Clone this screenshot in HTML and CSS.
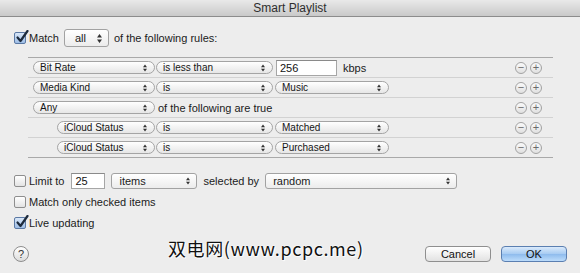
FILE: index.html
```html
<!DOCTYPE html>
<html lang="en">

<head>
    <meta charset="UTF-8">
    <title>Smart Playlist</title>
    <link rel="stylesheet" href="styles.css">
</head>

<body>
    <div class="titlebar">Smart Playlist</div>

    <div class="dialog">
        <div class="match-row">
            <span class="check on"><svg viewBox="0 0 14 14" width="14" height="14"><path d="M2.5 7.5 L5.5 11 L12.5 1" fill="none" stroke="#1c2a3c" stroke-width="2.2" stroke-linecap="round" stroke-linejoin="round"/></svg></span>
            <span class="lbl">Match</span>
            <span class="popup all">all<svg class="arr" viewBox="0 0 5 9" width="5" height="9"><path d="M0 3.5 L2.5 0 L5 3.5Z M0 5.5 L2.5 9 L5 5.5Z" fill="#333"/></svg></span>
            <span class="lbl">of the following rules:</span>
        </div>

        <div class="rules">
            <div class="rule">
                <span class="pill field">Bit Rate<svg class="arr" viewBox="0 0 5 9" width="4" height="8"><path d="M0 3.5 L2.5 0 L5 3.5Z M0 5.5 L2.5 9 L5 5.5Z" fill="#333"/></svg></span>
                <span class="pill op">is less than<svg class="arr" viewBox="0 0 5 9" width="4" height="8"><path d="M0 3.5 L2.5 0 L5 3.5Z M0 5.5 L2.5 9 L5 5.5Z" fill="#333"/></svg></span>
                <input class="text value-input" type="text" value="256">
                <span class="lbl unit">kbps</span>
                <span class="pm"><span class="round">&minus;</span><span class="round">+</span></span>
            </div>
            <div class="rule">
                <span class="pill field">Media Kind<svg class="arr" viewBox="0 0 5 9" width="4" height="8"><path d="M0 3.5 L2.5 0 L5 3.5Z M0 5.5 L2.5 9 L5 5.5Z" fill="#333"/></svg></span>
                <span class="pill op">is<svg class="arr" viewBox="0 0 5 9" width="4" height="8"><path d="M0 3.5 L2.5 0 L5 3.5Z M0 5.5 L2.5 9 L5 5.5Z" fill="#333"/></svg></span>
                <span class="pill value">Music<svg class="arr" viewBox="0 0 5 9" width="4" height="8"><path d="M0 3.5 L2.5 0 L5 3.5Z M0 5.5 L2.5 9 L5 5.5Z" fill="#333"/></svg></span>
                <span class="pm"><span class="round">&minus;</span><span class="round">+</span></span>
            </div>
            <div class="rule">
                <span class="pill field">Any<svg class="arr" viewBox="0 0 5 9" width="4" height="8"><path d="M0 3.5 L2.5 0 L5 3.5Z M0 5.5 L2.5 9 L5 5.5Z" fill="#333"/></svg></span>
                <span class="lbl nested-lbl">of the following are true</span>
                <span class="pm"><span class="round">&minus;</span><span class="round">+</span></span>
            </div>
            <div class="rule">
                <span class="pill field sub">iCloud Status<svg class="arr" viewBox="0 0 5 9" width="4" height="8"><path d="M0 3.5 L2.5 0 L5 3.5Z M0 5.5 L2.5 9 L5 5.5Z" fill="#333"/></svg></span>
                <span class="pill op">is<svg class="arr" viewBox="0 0 5 9" width="4" height="8"><path d="M0 3.5 L2.5 0 L5 3.5Z M0 5.5 L2.5 9 L5 5.5Z" fill="#333"/></svg></span>
                <span class="pill value">Matched<svg class="arr" viewBox="0 0 5 9" width="4" height="8"><path d="M0 3.5 L2.5 0 L5 3.5Z M0 5.5 L2.5 9 L5 5.5Z" fill="#333"/></svg></span>
                <span class="pm"><span class="round">&minus;</span><span class="round">+</span></span>
            </div>
            <div class="rule">
                <span class="pill field sub">iCloud Status<svg class="arr" viewBox="0 0 5 9" width="4" height="8"><path d="M0 3.5 L2.5 0 L5 3.5Z M0 5.5 L2.5 9 L5 5.5Z" fill="#333"/></svg></span>
                <span class="pill op">is<svg class="arr" viewBox="0 0 5 9" width="4" height="8"><path d="M0 3.5 L2.5 0 L5 3.5Z M0 5.5 L2.5 9 L5 5.5Z" fill="#333"/></svg></span>
                <span class="pill value">Purchased<svg class="arr" viewBox="0 0 5 9" width="4" height="8"><path d="M0 3.5 L2.5 0 L5 3.5Z M0 5.5 L2.5 9 L5 5.5Z" fill="#333"/></svg></span>
                <span class="pm"><span class="round">&minus;</span><span class="round">+</span></span>
            </div>
        </div>

        <div class="opt-row limit">
            <span class="check"></span>
            <span class="lbl">Limit to</span>
            <input class="text limit-input" type="text" value="25">
            <span class="popup items">items<svg class="arr" viewBox="0 0 5 9" width="4" height="8"><path d="M0 3.5 L2.5 0 L5 3.5Z M0 5.5 L2.5 9 L5 5.5Z" fill="#333"/></svg></span>
            <span class="lbl">selected by</span>
            <span class="popup random">random<svg class="arr" viewBox="0 0 5 9" width="4" height="8"><path d="M0 3.5 L2.5 0 L5 3.5Z M0 5.5 L2.5 9 L5 5.5Z" fill="#333"/></svg></span>
        </div>
        <div class="opt-row">
            <span class="check"></span>
            <span class="lbl">Match only checked items</span>
        </div>
        <div class="opt-row">
            <span class="check on"><svg viewBox="0 0 14 14" width="14" height="14"><path d="M2.5 7.5 L5.5 11 L12.5 1" fill="none" stroke="#1c2a3c" stroke-width="2.2" stroke-linecap="round" stroke-linejoin="round"/></svg></span>
            <span class="lbl">Live updating</span>
        </div>

        <div class="footer">
            <span class="help">?</span>
            <span class="watermark">双电网(www.pcpc.me)</span>
            <button class="btn">Cancel</button>
            <button class="btn default">OK</button>
        </div>
    </div>
</body>

</html>
```

FILE: styles.css
```css
* {
    padding: 0;
    margin: 0;
    box-sizing: border-box;
}

body {
    width: 580px;
    height: 273px;
    overflow: hidden;
    background: #ededed;
    font-family: 'Liberation Sans', Arial, sans-serif;
    font-size: 11px;
    color: #1b1b1b;
}

.titlebar {
    height: 17px;
    line-height: 16px;
    text-align: center;
    font-size: 12px;
    color: #2e2e2e;
    background: linear-gradient(#e9e9e9, #c9c9c9);
    border-bottom: 1px solid #8c8c8c;
}

.dialog {
    padding: 12px 13px 0 14px;
}

.lbl {
    white-space: nowrap;
}

/* checkboxes */
.check {
    position: relative;
    display: inline-block;
    flex: none;
    width: 12px;
    height: 12px;
    border: 1px solid #8e8e8e;
    border-radius: 2px;
    background: linear-gradient(#ffffff, #e3e3e3);
    margin-right: 3px;
}

.check.on {
    border-color: #5b79a4;
    background: linear-gradient(#d9e7f8, #9dbde6);
}

.check svg {
    position: absolute;
    left: 0;
    top: -3px;
}

/* match row */
.match-row {
    display: flex;
    align-items: center;
    height: 18px;
}

.popup {
    display: flex;
    align-items: center;
    justify-content: space-between;
    height: 16px;
    border: 1px solid #a2a2a2;
    border-radius: 3px;
    background: linear-gradient(#ffffff, #ececec);
    font-size: 11px;
    padding: 0 6px 0 7px;
    white-space: nowrap;
}

.popup.all {
    width: 45px;
    height: 18px;
    margin: 0 5px 0 5px;
    padding: 0 6px 0 10px;
}

.arr {
    flex: none;
}

/* rules */
.rules {
    margin: 10px 0 0 14px;
    width: 525px;
    border-top: 1px solid #a9a9a9;
    border-bottom: 1px solid #a9a9a9;
}

.rule {
    display: flex;
    align-items: center;
    height: 20px;
    padding: 0 11px 0 5px;
    border-bottom: 1px solid #d2d2d2;
}

.rule:last-child {
    border-bottom: none;
    height: 19px;
}

.pill {
    display: flex;
    align-items: center;
    justify-content: space-between;
    flex: none;
    height: 13px;
    border: 1px solid #a4a4a4;
    border-radius: 7px;
    background: linear-gradient(#ffffff, #e6e6e6);
    padding: 0 7px 0 6px;
    font-size: 10px;
    color: #151515;
    white-space: nowrap;
}

.pill.field {
    width: 122px;
}

.pill.field.sub {
    width: 98px;
    margin-left: 24px;
}

.pill.op {
    width: 117px;
    margin-left: 1px;
}

.pill.value {
    width: 114px;
    margin-left: 2px;
}

.text {
    font-family: 'Liberation Sans', Arial, sans-serif;
    font-size: 11px;
    color: #111;
    background: #fff;
    border: 1px solid #a6a6a6;
    border-top-color: #8a8a8a;
    outline: none;
    padding: 0 3px;
    height: 16px;
}

.value-input {
    width: 61px;
    margin-left: 3px;
}

.unit {
    margin-left: 6px;
}

.nested-lbl {
    margin-left: 3px;
}

.pm {
    display: flex;
    gap: 3px;
    margin-left: auto;
}

.round {
    display: flex;
    align-items: center;
    justify-content: center;
    width: 12px;
    height: 12px;
    border: 1px solid #a3a3a3;
    border-radius: 50%;
    background: linear-gradient(#fafafa, #e0e0e0);
    color: #6a6a6a;
    font-size: 11px;
    line-height: 1;
}

/* options */
.opt-row {
    display: flex;
    align-items: center;
    height: 16px;
    margin-top: 5px;
}

.opt-row.limit {
    margin-top: 15px;
}

.limit-input {
    width: 34px;
    margin-left: 7px;
}

.popup.items {
    width: 86px;
    margin: 0 6px;
}

.popup.random {
    width: 192px;
    margin-left: 6px;
}

/* footer */
.footer {
    display: flex;
    align-items: center;
    margin-top: 15px;
    height: 16px;
}

.help {
    display: flex;
    align-items: center;
    justify-content: center;
    width: 16px;
    height: 16px;
    margin-left: -1px;
    border: 1px solid #8d8d8d;
    border-radius: 50%;
    background: linear-gradient(#ffffff, #dcdcdc);
    font-size: 11px;
    color: #333;
}

.watermark {
    margin: -13px 0 0 139px;
    font-family: 'Noto Sans CJK SC', 'Liberation Sans', sans-serif;
    font-size: 18px;
    letter-spacing: 0.6px;
    color: #111;
    text-shadow: 0 0 2px #fff, 0 0 2px #fff, 1px 1px 1px #fff;
    white-space: nowrap;
}

.btn {
    width: 66px;
    height: 16px;
    border: 1px solid #8f8f8f;
    border-radius: 4px;
    background: linear-gradient(#ffffff, #e2e2e2);
    font-family: 'Liberation Sans', Arial, sans-serif;
    font-size: 11px;
    color: #111;
}

.btn:first-of-type {
    margin-left: auto;
}

.btn.default {
    margin-left: 10px;
    border-color: #5b7fb1;
    background: linear-gradient(#dbeafb, #a6cbf2 50%, #8ebbed 51%, #bcdcfb);
}
```
